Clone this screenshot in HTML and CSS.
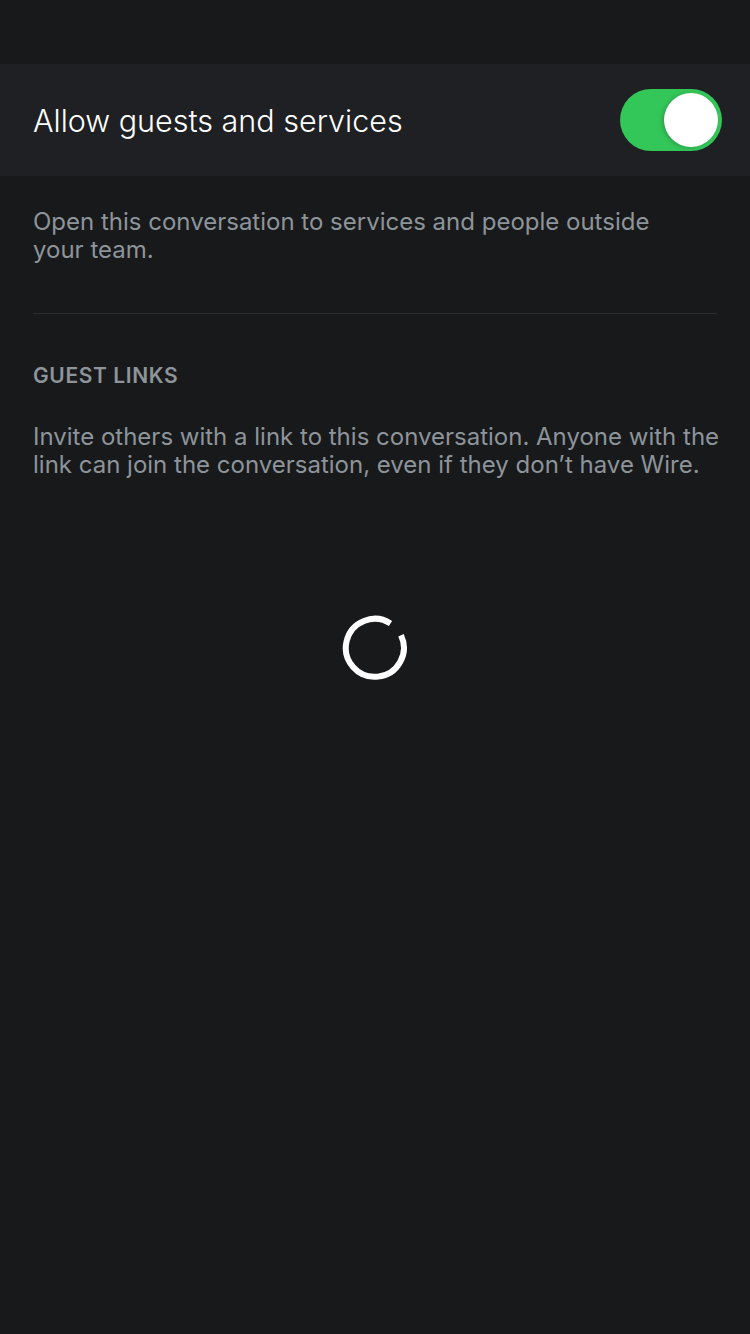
FILE: index.html
```html
<!DOCTYPE html>
<html>
<head>
<meta charset="utf-8">
<link rel="stylesheet" href="styles.css">
</head>
<body>
<div class="screen">
  <div class="top"></div>
  <div class="row">
    <span class="row-title">Allow guests and services</span>
    <div class="toggle on"><div class="knob"></div></div>
  </div>
  <div class="content">
    <p class="desc first">Open this conversation to services and people outside your team.</p>
    <div class="divider"></div>
    <div class="section-title">GUEST LINKS</div>
    <p class="desc invite">Invite others with a link to this conversation. Anyone with the link can join the conversation, even if they don’t have Wire.</p>
  </div>
  <div class="spinner-wrap">
    <svg class="spinner" width="70" height="70" viewBox="0 0 70 70">
      <path d="M 50.5 10.4 A 29 29 0 1 0 61 22.3" fill="none" stroke="#ffffff" stroke-width="6"/>
    </svg>
  </div>
</div>
</body>
</html>
```

FILE: styles.css
```css
html, body {
  margin: 0;
  padding: 0;
  background: #18191b;
}
.screen {
  width: 750px;
  height: 1334px;
  background: #18191b;
  font-family: "Inter", "Roboto", sans-serif;
  display: flex;
  flex-direction: column;
}
.top {
  height: 64px;
}
.row {
  height: 112px;
  background: #1f2023;
  display: flex;
  align-items: center;
  justify-content: space-between;
  padding: 0 28px 0 33px;
}
.row-title {
  color: #ffffff;
  font-size: 30.5px;
  font-weight: 300;
}
.toggle {
  width: 102px;
  height: 62px;
  border-radius: 31px;
  background: #33c659;
  position: relative;
}
.knob {
  position: absolute;
  right: 4px;
  top: 4px;
  width: 54px;
  height: 54px;
  border-radius: 50%;
  background: #ffffff;
  box-shadow: -2px 1px 4px rgba(0,0,0,0.18);
}
.content {
  padding: 0 12px 0 33px;
}
.desc {
  margin: 0;
  color: #8d949a;
  font-size: 24px;
  line-height: 28px;
}
.desc.first {
  margin-top: 32px;
  max-width: 640px;
}
.divider {
  height: 1px;
  background: #2b2d30;
  margin-top: 49px;
  margin-right: 21px;
}
.section-title {
  margin-top: 50px;
  color: #8d949a;
  font-size: 21px;
  line-height: 24px;
  font-weight: 600;
  letter-spacing: 0.6px;
}
.desc.invite {
  margin-top: 35px;
}
.spinner-wrap {
  display: flex;
  justify-content: center;
  margin-top: 134px;
}
```
